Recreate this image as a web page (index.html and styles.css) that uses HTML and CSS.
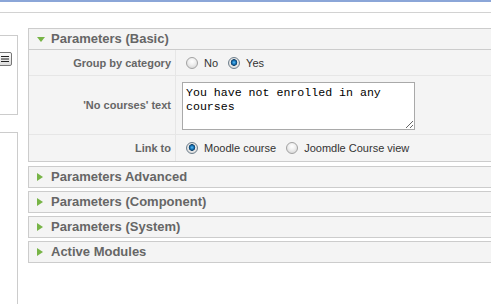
FILE: index.html
```html
<!DOCTYPE html>
<html lang="en">
<head>
    <meta charset="UTF-8">
    <title>Module Parameters</title>
    <link rel="stylesheet" href="styles.css">
</head>
<body>
    <div class="topbar"></div>

    <div class="page">
        <div class="sidebar">
            <div class="side-box">
                <button class="side-btn" aria-label="Menu">
                    <svg width="10" height="8" viewBox="0 0 10 8">
                        <path d="M1 1.5h8M1 4h8M1 6.5h8" stroke="#222" stroke-width="1.2" fill="none"/>
                    </svg>
                </button>
            </div>
            <div class="side-box side-box-tall"></div>
        </div>

        <div class="pane-sliders">
            <div class="panel">
                <h3 class="toggler open">Parameters (Basic)</h3>
                <div class="paramlist">
                    <div class="param-row">
                        <div class="param-key">Group by category</div>
                        <div class="param-value">
                            <label class="radio"><input type="radio" name="group"> No</label>
                            <label class="radio"><input type="radio" name="group" checked> Yes</label>
                        </div>
                    </div>
                    <div class="param-row">
                        <div class="param-key">'No courses' text</div>
                        <div class="param-value textarea-cell">
                            <textarea>You have not enrolled in any courses</textarea>
                        </div>
                    </div>
                    <div class="param-row">
                        <div class="param-key">Link to</div>
                        <div class="param-value">
                            <label class="radio"><input type="radio" name="link" checked> Moodle course</label>
                            <label class="radio"><input type="radio" name="link"> Joomdle Course view</label>
                        </div>
                    </div>
                </div>
            </div>
            <div class="panel"><h3 class="toggler">Parameters Advanced</h3></div>
            <div class="panel"><h3 class="toggler">Parameters (Component)</h3></div>
            <div class="panel"><h3 class="toggler">Parameters (System)</h3></div>
            <div class="panel"><h3 class="toggler">Active Modules</h3></div>
        </div>
    </div>
</body>
</html>
```

FILE: styles.css
```css
body {
    margin: 0;
    overflow: hidden;
    font-family: 'Liberation Sans', Arial, sans-serif;
    font-size: 11px;
    color: #333;
    background-color: #fff;
}

.topbar {
    height: 10px;
    border-top: 2px solid #8ba6d8;
    border-bottom: 1px solid #d2d2d2;
}

.page {
    display: flex;
    padding-top: 15px;
    width: 800px;
}

/* left column, mostly off screen */
.sidebar {
    width: 150px;
    margin-left: -132px;
    margin-top: 7px;
    flex-shrink: 0;
}

.side-box {
    height: 78px;
    border: 1px solid #ccc;
    margin-bottom: 17px;
    display: flex;
    justify-content: flex-end;
    align-items: flex-start;
}

.side-box-tall {
    height: 300px;
}

.side-btn {
    margin: 16px 5px 0 0;
    width: 24px;
    height: 14px;
    padding: 0 1px 0 0;
    display: flex;
    align-items: center;
    justify-content: flex-end;
    border: 1px solid #777;
    border-radius: 2px;
    background: linear-gradient(#fdfdfd, #dcdcdc);
}

.pane-sliders {
    margin-left: 10px;
    flex: 1;
}

.panel {
    border: 1px solid #ccc;
    margin-bottom: 3px;
    background-color: #f4f4f4;
}

.panel:first-child {
    margin-bottom: 4px;
}

.toggler {
    margin: 0;
    height: 20px;
    line-height: 20px;
    padding-left: 8px;
    font-size: 13px;
    font-weight: bold;
    color: #666;
    display: flex;
    align-items: center;
}

.toggler::before {
    content: '';
    width: 0;
    height: 0;
    margin-right: 8px;
    border-top: 4px solid transparent;
    border-bottom: 4px solid transparent;
    border-left: 6px solid #77b446;
}

.toggler.open {
    border-bottom: 1px solid #ccc;
}

.toggler.open::before {
    margin-right: 6px;
    margin-top: 1px;
    border-left: 4px solid transparent;
    border-right: 4px solid transparent;
    border-top: 5px solid #77b446;
    border-bottom: 0;
}

.param-row {
    display: grid;
    grid-template-columns: 147px 1fr;
    border-bottom: 1px solid #e6e6e6;
    min-height: 25px;
}

.param-row:last-child {
    border-bottom: 0;
    min-height: 26px;
}

.param-key {
    border-right: 1px solid #e6e6e6;
    text-align: right;
    padding-right: 4px;
    font-weight: bold;
    color: #666;
    display: flex;
    align-items: center;
    justify-content: flex-end;
}

.param-value {
    padding-left: 6px;
    display: flex;
    align-items: center;
}

.textarea-cell {
    padding: 6px 0 4px 6px;
}

textarea {
    width: 233px;
    height: 48px;
    box-sizing: border-box;
    margin: 0;
    padding: 3px;
    border: 1px solid #a9a9a9;
    font-family: 'Liberation Mono', 'Courier New', monospace;
    font-size: 11.6px;
    line-height: 14px;
    color: #000;
    background-color: #fff;
}

.radio {
    display: flex;
    align-items: center;
    margin-right: 6px;
    color: #333;
}

.radio input {
    -webkit-appearance: none;
    appearance: none;
    width: 12px;
    height: 12px;
    margin: 0 6px 0 4px;
    border: 1px solid #a2a2a2;
    border-radius: 50%;
    background: radial-gradient(circle at 50% 35%, #ffffff 0, #f0f0f0 40%, #cfcfcf 100%);
}

.radio input:checked {
    border-color: #6e7f8c;
    background: radial-gradient(circle at 50% 45%, #63c2f2 0, #1a7cc4 1.6px, #0c3f68 3px, #e9e9e9 3.6px, #cfcfcf 100%);
}
```
